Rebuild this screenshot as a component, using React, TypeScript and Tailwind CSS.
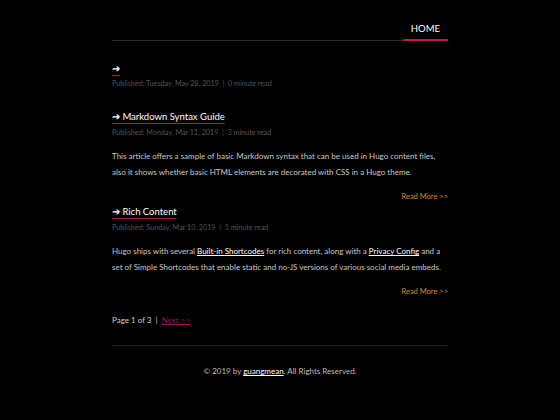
export default function App() {
  const font = { fontFamily: "Lato, 'Noto Sans', sans-serif" }
  const title = "text-white underline decoration-[#a01c55] decoration-1 underline-offset-[3px]"
  return (
    <div className="min-h-[420px] w-full bg-black text-[#d0d0d0]" style={font}>
      <div className="mx-auto w-[336px]">
        <header className="flex justify-end border-b border-[#2a2a2a] pt-[23px]">
          <a className="-mb-px block border-b-2 border-[#c2185b] px-[8px] pb-[4px] text-[9.5px] leading-[12px] text-white">
            HOME
          </a>
        </header>

        <main className="pt-[20px]">
          <article>
            <h2 className="text-[10px] leading-[14px]">
              <a className={title}>➔</a>
            </h2>
            <p className="mt-[4px] text-[7.2px] leading-[10px] text-[#555]">
              Published: Tuesday, May 28, 2019 &nbsp;|&nbsp; 0 minute read
            </p>
          </article>

          <article className="mt-[21px]">
            <h2 className="text-[9.5px] leading-[14px]">
              <a className={title}>➔ Markdown Syntax Guide</a>
            </h2>
            <p className="mt-[4px] text-[7.2px] leading-[10px] text-[#555]">
              Published: Monday, Mar 11, 2019 &nbsp;|&nbsp; 3 minute read
            </p>
            <p className="mt-[10px] text-[8px] leading-[16px] text-[#c8c8c8]">
              This article offers a sample of basic Markdown syntax that can be used in Hugo content files, also it
              shows whether basic HTML elements are decorated with CSS in a Hugo theme.
            </p>
            <p className="mt-[12px] text-right text-[7.5px] leading-[10px]">
              <a className="text-[#d98a1c]">Read More &gt;&gt;</a>
            </p>
          </article>

          <article className="mt-[3px]">
            <h2 className="text-[9.5px] leading-[14px]">
              <a className={title}>➔ Rich Content</a>
            </h2>
            <p className="mt-[4px] text-[7.2px] leading-[10px] text-[#555]">
              Published: Sunday, Mar 10, 2019 &nbsp;|&nbsp; 1 minute read
            </p>
            <p className="mt-[10px] text-[8px] leading-[16px] text-[#c8c8c8]">
              Hugo ships with several <a className="text-white underline">Built-in Shortcodes</a> for rich content,
              along with a <a className="text-white underline">Privacy Config</a> and a set of Simple Shortcodes that
              enable static and no-JS versions of various social media embeds.
            </p>
            <p className="mt-[12px] text-right text-[7.5px] leading-[10px]">
              <a className="text-[#d98a1c]">Read More &gt;&gt;</a>
            </p>
          </article>

          <nav className="mt-[17px] text-[8px] leading-[12px] text-[#cfcfcf]">
            Page 1 of 3 &nbsp;|&nbsp; <a className="text-[#9c1450] underline">Next &gt;&gt;</a>
          </nav>
        </main>

        <footer className="mt-[19px] border-t border-[#1e1e1e] pt-[19px] text-center text-[8px] leading-[12px] text-[#bdbdbd]">
          © 2019 by <a className="text-white underline">guangmean</a>. All Rights Reserved.
        </footer>
      </div>
    </div>
  )
}
